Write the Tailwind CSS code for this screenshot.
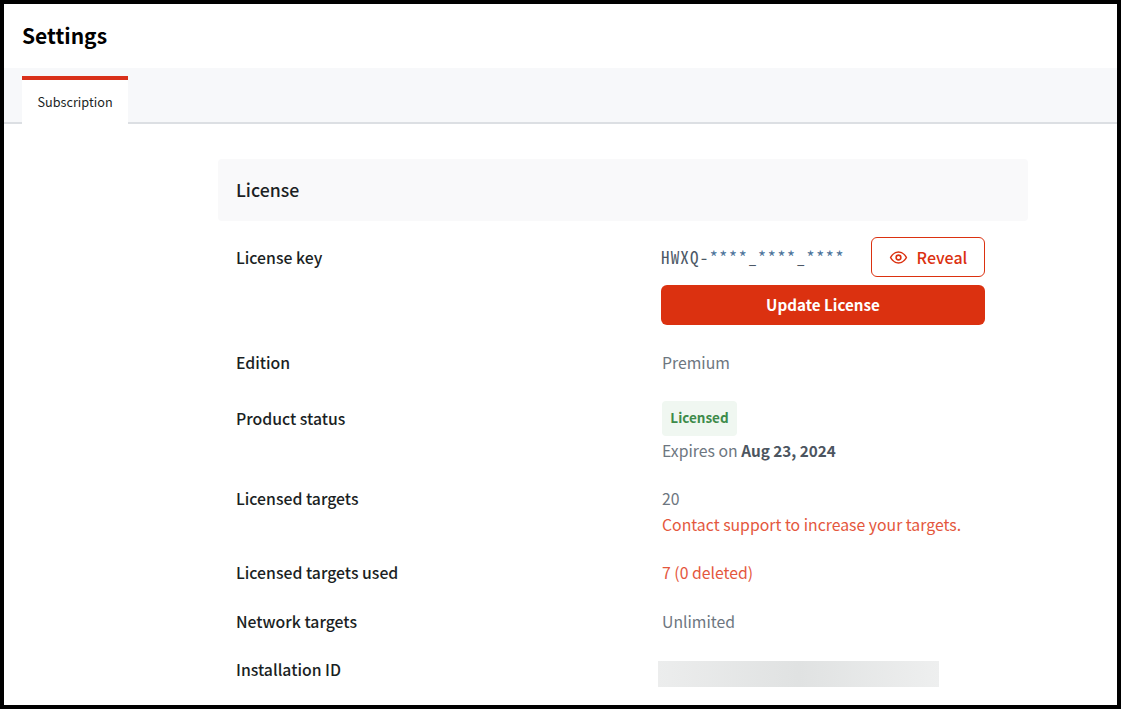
<!DOCTYPE html>
<html>
<head>
	<meta charset="UTF-8" />
	<script src="https://cdn.jsdelivr.net/npm/@tailwindcss/browser@4"></script>
	<title>Settings</title>
</head>
<body class="bg-black">
	<div class="h-[709px] overflow-hidden border-4 border-black bg-white font-['Noto_Sans_CJK_SC','Noto_Sans',sans-serif] text-[#1b1f24]">
		<div class="pl-[18px] h-[64px] flex items-center">
			<h1 class="text-[21px] font-bold text-black -mt-[1px]">Settings</h1>
		</div>
		<!-- Tabs -->
		<div class="h-[56px] bg-[#f7f8fa] border-b-2 border-[#dcdfe3] pl-[18px] pt-2">
			<div class="w-[106px] h-[48px] bg-white border-t-4 border-[#d9301a] flex items-center justify-center text-[12.7px]">Subscription</div>
		</div>

		<section class="ml-[214px] w-[810px] mt-[35px]">
			<div class="h-[62px] bg-[#f9f9fa] rounded px-[18px] flex items-center">
				<h2 class="text-[17.7px] font-medium -mt-[2px]">License</h2>
			</div>

			<div class="flex pl-[18px] pt-[16px] h-[129px]">
				<div class="w-[425px] text-[15.8px] font-medium leading-[24px] pt-[9px]">License key</div>
				<div class="w-[324px]">
					<div class="flex items-center justify-between h-[40px]">
						<span class="font-['Noto_Sans_Mono_CJK_SC','Liberation_Mono',monospace] text-[17px] tracking-[1.18px] text-[#4c5866]">HWXQ-<span class="text-[#4a7299]">****</span>_<span class="text-[#4a7299]">****</span>_<span class="text-[#4a7299]">****</span></span>
						<button class="w-[114px] h-[40px] rounded-md border border-[#db3110] text-[#db3110] text-[16px] font-medium flex items-center justify-center gap-[9px]">
							<svg width="19" height="19" viewBox="0 0 24 24" fill="none" stroke="currentColor" stroke-width="2" stroke-linecap="round" stroke-linejoin="round"><path d="M2 12s3.6-7 10-7 10 7 10 7-3.6 7-10 7-10-7-10-7z"/><circle cx="12" cy="12" r="3"/></svg>
							Reveal
						</button>
					</div>
					<button class="mt-2 w-full h-[40px] rounded-md bg-[#db3110] text-white text-[15.2px] font-bold pb-[1px]">Update License</button>
				</div>
			</div>

			<div class="flex pl-[18px] h-[57px] text-[15.8px] leading-[24px]">
				<div class="w-[426px] font-medium pt-[1px]">Edition</div>
				<div class="text-[#6d7680] pt-[1px]">Premium</div>
			</div>

			<div class="flex pl-[18px] h-[79px] text-[15.8px] leading-[24px]">
				<div class="w-[426px] font-medium">Product status</div>
				<div class="text-[#6d7680] -mt-[6px]">
					<span class="block w-[75px] h-[35px] leading-[33px] text-center rounded bg-[#f0f7f1] text-[#3d8b4a] text-[13.5px] font-bold">Licensed</span>
					<div class="mt-[2px]">Expires on <span class="font-bold text-[15.3px] text-[#4c5560]">Aug 23, 2024</span></div>
				</div>
			</div>

			<div class="flex pl-[18px] h-[75px] text-[15.8px] leading-[26px]">
				<div class="w-[426px] font-medium">Licensed targets</div>
				<div>
					<div class="text-[#6d7680]">20</div>
					<a class="text-[#e4573d]">Contact support to increase your targets.</a>
				</div>
			</div>

			<div class="flex pl-[18px] h-[49px] text-[15.8px] leading-[24px]">
				<div class="w-[426px] font-medium">Licensed targets used</div>
				<div class="text-[#e4573d]">7 (0 deleted)</div>
			</div>

			<div class="flex pl-[18px] h-[48px] text-[15.8px] leading-[24px]">
				<div class="w-[426px] font-medium">Network targets</div>
				<div class="text-[#6d7680]">Unlimited</div>
			</div>

			<div class="flex pl-[18px] text-[15.8px] leading-[24px]">
				<div class="w-[422px] font-medium">Installation ID</div>
				<div class="w-[281px] h-[26px] mt-[3px] bg-gradient-to-r from-[#eceded] via-[#e0e2e2] to-[#eeefef]"></div>
			</div>
		</section>
	</div>
</body>
</html>
